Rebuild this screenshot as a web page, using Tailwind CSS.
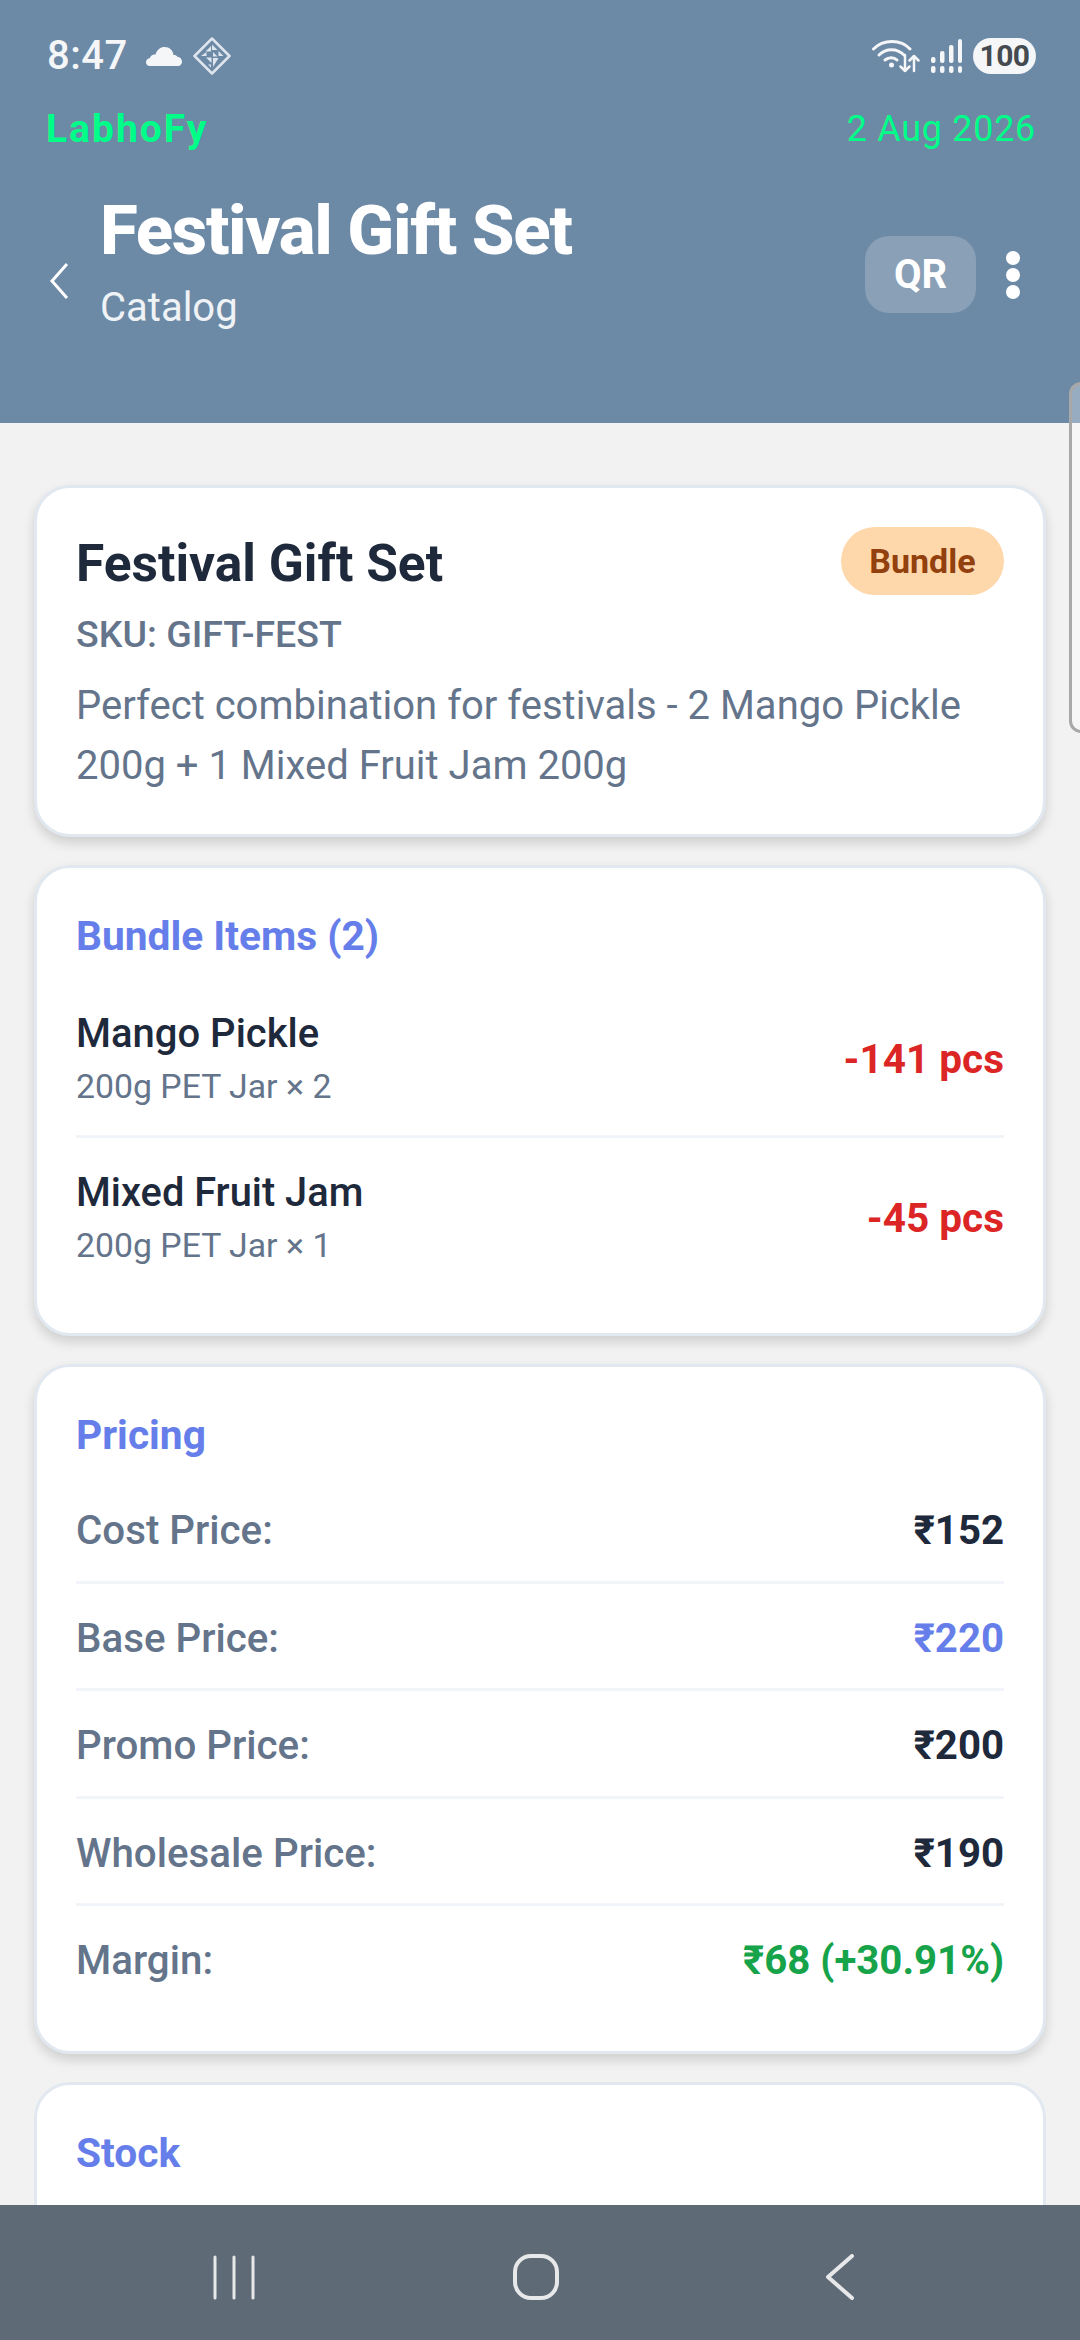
<!DOCTYPE html>
<html lang="en">
<head>
    <meta charset="UTF-8">
    <meta name="viewport" content="width=device-width, initial-scale=1.0">
    <title>Festival Gift Set</title>
    <script src="https://cdn.jsdelivr.net/npm/@tailwindcss/browser@4"></script>
</head>
<body class="overflow-hidden">
    <div class="relative w-[1080px] h-[2340px] flex flex-col overflow-hidden bg-[#f2f2f2] font-['Roboto',sans-serif]">

        <!-- header -->
        <header class="h-[423px] shrink-0 bg-[#6c89a6] px-[46px] relative">
            <div class="h-[102px] flex items-center justify-between pt-[10px]">
                <div class="flex items-center">
                    <span class="ml-[1px] text-[40px] font-medium tracking-[0.5px] text-[#f4f6f8] leading-none">8:47</span>
                    <svg class="ml-[18px] w-[36px] h-[20px]" viewBox="0 0 36 20" fill="#f4f6f8"><path d="M4 20C1.500 20 0 18.300 0 16.200 0 14 1.500 12.300 4 12 4.500 9.500 7 8 9.500 8.500 11 3.500 14.500 1 18.500 1 23.500 1 27 4.500 27.500 9 29 8.700 30.500 9.300 31.500 10.800 34 11.200 36 13 36 15.800 36 18.300 34.300 20 32 20z"/></svg>
                    <svg class="ml-[11px] w-[38px] h-[38px]" viewBox="0 0 38 38" fill="none" stroke="#dfe5ec" stroke-width="2.500"><path d="M19 1.500 36.500 19 19 36.500 1.500 19z" stroke-linejoin="round"/><path d="M19 7.500l5.500 5.500h-5.500zM18 9l-5.500 5.500h5.500zM8 19l5.500-4v4zM25.500 14l5 5h-5zM13 20.500h5.500V26zM20 15l4.500 4.500H20zM20 21h5.500l-5.500 9zM18 27.500v3l-3-3z" stroke="none" fill="#dfe5ec"/></svg>
                </div>
                <div class="flex items-center mr-[-2px]">
                    <svg class="w-[48px] h-[36px]" viewBox="0 0 48 36" fill="none" stroke="#f4f6f8" stroke-linecap="round" stroke-linejoin="round"><path d="M1.500 11C11 1 29 1 38 11" stroke-width="3"/><path d="M7 17c7-7 18-7 25 0" stroke-width="3"/><path d="M13 22c3.500-3 9-3 12 0" stroke-width="3"/><circle cx="19.500" cy="27" r="2.500" fill="#f4f6f8" stroke="none"/><path d="M33 17v16M28.500 28.500 33 33l4.500-4.500M42 33V18M37.500 22.500 42 18l4.500 4.500" stroke-width="2.500"/></svg>
                    <svg class="ml-[10px] w-[32px] h-[34px]" viewBox="0 0 32 34" fill="#f4f6f8"><rect x="1" y="27" width="4.500" height="7" rx="2"/><rect x="10" y="27" width="4.500" height="7" rx="2"/><rect x="19" y="27" width="4.500" height="7" rx="2"/><rect x="28" y="27" width="4" height="7" rx="2"/><rect x="1" y="18" width="4.500" height="6" rx="2"/><rect x="10" y="12" width="4.500" height="12" rx="2"/><rect x="19" y="6" width="4.500" height="18" rx="2"/><rect x="28" y="0" width="4" height="24" rx="2"/></svg>
                    <span class="ml-[11px] w-[63px] h-[36px] rounded-full bg-[#f4f6f8] text-[#444a50] text-[30px] font-bold leading-none tracking-[-0.5px] flex items-center justify-center">100</span>
                </div>
            </div>
            <div class="flex items-center justify-between h-[54px]">
                <span class="text-[39px] font-bold tracking-[2px] text-[#00ff88] leading-none">LabhoFy</span>
                <span class="mr-[-2px] text-[36px] tracking-[0.7px] text-[#00ff88] leading-none">2 Aug 2026</span>
            </div>
            <div class="flex items-center mt-[30px]">
                <svg class="w-[20px] h-[36px] ml-[3px] mt-[44px]" viewBox="0 0 20 36" fill="none" stroke="#fff" stroke-width="3"><path d="M18 1 3 18l15 17"/></svg>
                <div class="ml-[31px]">
                    <h1 class="pt-[4px] text-[69px] font-extrabold tracking-[-1.350px] text-white leading-[82px]">Festival Gift Set</h1>
                    <p class="mt-[13px] text-[40px] text-white/90 leading-[46px]">Catalog</p>
                </div>
                <div class="ml-auto flex items-center mt-[32px]">
                    <button class="w-[111px] h-[77px] rounded-[24px] bg-white/20 text-white text-[40px] font-bold">QR</button>
                    <div class="ml-[30px] mr-[14px] flex flex-col gap-[3px]">
                        <span class="w-[14px] h-[14px] rounded-full bg-white"></span>
                        <span class="w-[14px] h-[14px] rounded-full bg-white"></span>
                        <span class="w-[14px] h-[14px] rounded-full bg-white"></span>
                    </div>
                </div>
            </div>
        </header>

        <!-- content -->
        <main class="flex-1 overflow-hidden px-[34px] pt-[62px] flex flex-col gap-[28px]">
            <section class="shrink-0 bg-white rounded-[36px] border-[3px] border-[#e2e8f0] shadow-[0_6px_12px_rgba(0,0,0,0.15)] px-[39px] pt-[39px] pb-[38px]">
                <div class="flex items-start justify-between">
                    <h2 class="pt-[3px] text-[51.500px] font-bold text-[#1e293b] leading-[68px]">Festival Gift Set</h2>
                    <span class="h-[68px] px-[28.500px] rounded-full bg-[#fed7aa] text-[#92400e] text-[34px] font-bold flex items-center">Bundle</span>
                </div>
                <p class="mt-[12px] text-[37.500px] font-medium text-[#64748b] leading-[48px]">SKU: GIFT-FEST</p>
                <p class="mt-[18px] text-[40px] text-[#64748b] leading-[60px]">Perfect combination for festivals - 2 Mango Pickle 200g + 1 Mixed Fruit Jam 200g</p>
            </section>

            <section class="shrink-0 bg-white rounded-[36px] border-[3px] border-[#e2e8f0] shadow-[0_6px_12px_rgba(0,0,0,0.15)] px-[39px] pt-[43px] pb-[38px]">
                <h3 class="text-[40.700px] font-bold text-[#667eea] leading-[50px]">Bundle Items (2)</h3>
                <div class="mt-[19px] pt-[3px] flex items-center justify-between h-[158px] border-b-[3px] border-[#f1f5f9]">
                    <div>
                        <p class="text-[40px] font-medium text-[#1e293b] leading-[50px]">Mango Pickle</p>
                        <p class="mt-[5px] text-[33.800px] text-[#64748b] leading-[46px]">200g PET Jar × 2</p>
                    </div>
                    <span class="text-[40.500px] font-bold text-[#dc2626]">-141 pcs</span>
                </div>
                <div class="pt-[3px] flex items-center justify-between h-[157px]">
                    <div>
                        <p class="text-[39.800px] font-medium text-[#1e293b] leading-[50px]">Mixed Fruit Jam</p>
                        <p class="mt-[5px] text-[33.800px] text-[#64748b] leading-[46px]">200g PET Jar × 1</p>
                    </div>
                    <span class="text-[40.500px] font-bold text-[#dc2626]">-45 pcs</span>
                </div>
            </section>

            <section class="shrink-0 bg-white rounded-[36px] border-[3px] border-[#e2e8f0] shadow-[0_6px_12px_rgba(0,0,0,0.15)] px-[39px] pt-[43px] pb-[40px]">
                <h3 class="text-[40.700px] font-bold text-[#667eea] leading-[50px]">Pricing</h3>
                <div class="mt-[16px] pt-[6px] flex items-center justify-between h-[107.500px] border-b-[3px] border-[#f1f5f9]">
                    <span class="text-[40.300px] font-medium text-[#64748b]">Cost Price:</span>
                    <span class="text-[40.200px] font-bold text-[#1e293b]">₹152</span>
                </div>
                <div class="pt-[6px] flex items-center justify-between h-[107.500px] border-b-[3px] border-[#f1f5f9]">
                    <span class="text-[40.300px] font-medium text-[#64748b]">Base Price:</span>
                    <span class="text-[40.200px] font-bold text-[#667eea]">₹220</span>
                </div>
                <div class="pt-[6px] flex items-center justify-between h-[107.500px] border-b-[3px] border-[#f1f5f9]">
                    <span class="text-[40.300px] font-medium text-[#64748b]">Promo Price:</span>
                    <span class="text-[40.200px] font-bold text-[#1e293b]">₹200</span>
                </div>
                <div class="pt-[6px] flex items-center justify-between h-[107.500px] border-b-[3px] border-[#f1f5f9]">
                    <span class="text-[40.300px] font-medium text-[#64748b]">Wholesale Price:</span>
                    <span class="text-[40.200px] font-bold text-[#1e293b]">₹190</span>
                </div>
                <div class="pt-[6px] flex items-center justify-between h-[105px]">
                    <span class="text-[40.300px] font-medium text-[#64748b]">Margin:</span>
                    <span class="text-[40.200px] font-bold text-[#16a34a]">₹68 (+30.91%)</span>
                </div>
            </section>

            <section class="shrink-0 bg-white rounded-[36px] border-[3px] border-[#e2e8f0] px-[39px] pt-[43px] h-[300px]">
                <h3 class="text-[40.700px] font-bold text-[#667eea] leading-[50px]">Stock</h3>
            </section>
        </main>

        <!-- android nav bar -->
        <nav class="h-[135px] shrink-0 bg-[#5e6a75] relative z-10 flex items-center pl-[212px] pt-[9px]">
            <svg class="w-[44px] h-[45px]" viewBox="0 0 44 45" stroke="#e6e8ea" stroke-width="3" stroke-linecap="round"><path d="M3 2v41M22 2v41M41 2v41"/></svg>
            <svg class="ml-[257px] w-[46px] h-[46px]" viewBox="0 0 46 46" fill="none" stroke="#e6e8ea" stroke-width="4"><rect x="2" y="2" width="42" height="42" rx="16"/></svg>
            <svg class="ml-[266px] w-[30px] h-[46px]" viewBox="0 0 30 46" fill="none" stroke="#e6e8ea" stroke-width="4" stroke-linecap="round" stroke-linejoin="round"><path d="M27 2 3 23l24 21"/></svg>
        </nav>

        <!-- side panel handle -->
        <div class="absolute left-[1069px] top-[382px] w-[20px] h-[351px] rounded-l-[12px] border-[3px] border-[#a8a8a8] bg-white/30"></div>
    </div>
</body>
</html>
